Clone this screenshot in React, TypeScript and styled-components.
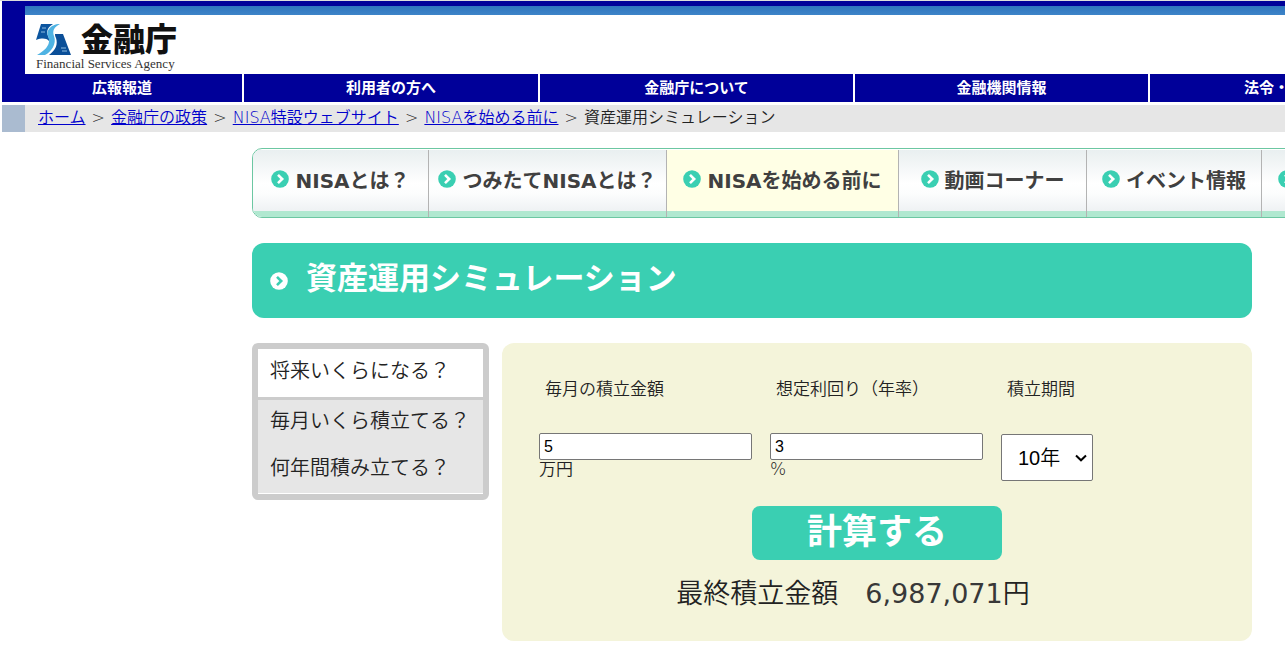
import React, { useState } from "react";
import styled, { createGlobalStyle } from "styled-components";

const fonts = `"DejaVu Sans", "Noto Sans CJK JP", sans-serif`;
const navy = "#000099";
const teal = "#3acfb2";

const Global = createGlobalStyle`
  *, *::before, *::after { box-sizing: border-box; }
  html { overflow-x: hidden; }
  body {
    margin: 0;
    background: #fff;
    color: #222;
    font-family: ${fonts};
    font-size: 16px;
    font-weight: 350;
  }
`;

const Page = styled.div`
  overflow: hidden;
`;

const Sheet = styled.div`
  min-width: 1504px;
  border-top: 1px solid #dcdcdc;
`;

const Header = styled.header`
  margin-left: 2px;
  background: ${navy};
  padding: 5px 0 0 23px;
`;

const Stripe = styled.div`
  height: 9px;
  background: linear-gradient(#2f74bd, #3d84c8);
`;

const Brand = styled.a`
  display: flex;
  flex-direction: column;
  height: 59px;
  padding: 8px 0 0 11px;
  background: #fff;
  color: #111;
  text-decoration: none;
`;

const BrandTop = styled.span`
  display: flex;
  align-items: center;
  gap: 9px;
  height: 34px;
`;

const BrandName = styled.span`
  font-size: 32px;
  line-height: 34px;
  font-weight: 900;
`;

const BrandSub = styled.span`
  font-family: "Liberation Serif", serif;
  font-size: 13px;
  line-height: 14px;
  font-weight: 400;
  color: #333;
`;

const GlobalNav = styled.nav`
  display: grid;
  grid-template-columns: 240px 294px 313px 293px 278px;
  gap: 2px;
  margin-left: 2px;
`;

const GlobalLink = styled.a`
  background: ${navy};
  color: #fff;
  font-size: 15px;
  font-weight: 700;
  line-height: 28px;
  text-align: center;
  text-decoration: none;
`;

const Crumbs = styled.nav`
  display: flex;
  margin: 3px 0 0 2px;
  border-left: 23px solid #aabbd0;
  background: #e6e6e6;
  padding: 0 0 2px 13px;
  line-height: 25px;
  white-space: pre;

  a { color: #0000cc; }
`;

const Separator = styled.span`
  padding: 0 1px;
`;

const Main = styled.main`
  width: 1000px;
  margin: 16px auto 0;
`;

const Tabs = styled.nav`
  display: grid;
  grid-template-columns: 176px 238px 232px 188px 175px 176px;
  width: max-content;
  height: 70px;
  padding-top: 1px;
  border: 1px solid #6cc7a2;
  border-radius: 10px;
  overflow: hidden;
`;

const Tab = styled.a<{ $active?: boolean }>`
  display: flex;
  align-items: center;
  justify-content: center;
  gap: 6px;
  border-right: 1px solid #b3b3b3;
  box-shadow: inset 0 -6px #b0e8d0;
  background: ${(p) =>
    p.$active ? "#ffffe5" : "linear-gradient(#e9eff0, #fff 50%, #fcfdfd 65%, #eff2f4 90%)"};
  padding-bottom: 6px;
  color: #404040;
  font-size: 20px;
  font-weight: 700;
  line-height: 30px;
  text-decoration: none;
  white-space: nowrap;

  svg { margin-bottom: 4px; }
`;

const Title = styled.h1`
  display: flex;
  align-items: center;
  gap: 18px;
  height: 75px;
  margin: 25px 0;
  padding-left: 18px;
  border-radius: 12px;
  background: ${teal};
  color: #fff;
  font-size: 31px;
  line-height: 45px;

  span { padding-bottom: 5px; }
`;

const Columns = styled.div`
  display: grid;
  grid-template-columns: 237px 1fr;
  gap: 13px;
  align-items: start;
`;

const Menu = styled.nav`
  display: flex;
  flex-direction: column;
  border: 6px solid #ccc;
  border-radius: 6px;
  background: #e6e6e6;
`;

const MenuLink = styled.a<{ $current?: boolean }>`
  padding: 0 12px 4px;
  color: #222;
  font-size: 20px;
  line-height: ${(p) => (p.$current ? "44px" : "43px")};
  text-decoration: none;
  ${(p) => p.$current && "background: #fff; border-bottom: 3px solid #ccc;"}
  &:last-child { padding-bottom: 3px; border-bottom: 1px solid #fff; }
`;

const Panel = styled.form`
  display: flex;
  flex-direction: column;
  align-items: center;
  padding: 34px 37px 28px;
  border-radius: 12px;
  background: #f4f4da;
`;

const Fields = styled.div`
  display: grid;
  grid-template-columns: repeat(3, 213px);
  gap: 18px;
  width: 100%;
`;

const Field = styled.div`
  display: flex;
  flex-direction: column;
  align-items: flex-start;
  font-size: 17px;
  line-height: 18px;
`;

const FieldLabel = styled.label`
  padding-left: 6px;
  line-height: 24px;
  margin-bottom: 32px;
`;

const NumberInput = styled.input`
  width: 100%;
  height: 27px;
  padding: 1px 4px;
  border: 1px solid #767676;
  border-radius: 2px;
  background: #fff;
  color: #000;
  font: 16px "Liberation Sans", sans-serif;
`;

const PeriodBox = styled.span`
  display: grid;
  align-items: center;
  margin-top: 1px;

  select, svg { grid-area: 1 / 1; }
  svg { justify-self: end; margin-right: 6px; pointer-events: none; }
`;

const PeriodSelect = styled.select`
  appearance: none;
  width: 92px;
  height: 47px;
  padding: 0 16px;
  border: 1px solid #767676;
  border-radius: 2px;
  background: #fff;
  color: #000;
  font: 350 20px "Liberation Sans", "Noto Sans CJK JP", sans-serif;
`;

const Submit = styled.button`
  width: 250px;
  height: 54px;
  margin-top: 25px;
  padding: 0 0 2px;
  border: 0;
  border-radius: 8px;
  background: ${teal};
  color: #fff;
  font: 700 35px/52px ${fonts};
`;

const Result = styled.p`
  margin: 15px 0 0;
  padding-right: 48px;
  font-size: 27px;
  line-height: 38px;
`;

const Amount = styled.span`
  color: #383838;
  font-weight: 400;
`;

function Bullet({ disc, mark }: { disc: string; mark: string }) {
  return (
    <svg width="18" height="18" viewBox="0 0 18 18" aria-hidden="true">
      <circle cx="9" cy="9" r="8.8" fill={disc} />
      <path d="M7 4.8 11.2 9 7 13.2" fill="none" stroke={mark} strokeWidth="2.6" />
    </svg>
  );
}

function Emblem() {
  return (
    <svg width="36" height="32" viewBox="0 0 36 32" aria-hidden="true">
      <path d="M5 0H17C12 3 10 7 12 12C13 14 13 15 13 17C10 14 6 14 0 16Z" fill="#0b559f" />
      <path d="M24 0C18 3 16 7 18 12C21 20 15 28 9 31H1C8 27 14 22 13 15C12 11 10 9 13 5C15 2 19 0 24 0Z" fill="#4fb3e3" />
      <path d="M19 10H27L35 31H13C20 26 22 20 20 14C19 12 19 11 19 10Z" fill="#0b4f98" />
      <path d="M6 4H10M5 8H9M25 24H30M26 27H31" stroke="#8fbde0" strokeWidth="1" />
    </svg>
  );
}

const sections = ["広報報道", "利用者の方へ", "金融庁について", "金融機関情報", "法令・指針等"];
const trail = ["ホーム", "金融庁の政策", "NISA特設ウェブサイト", "NISAを始める前に"];
const tabs = ["NISAとは？", "つみたてNISAとは？", "NISAを始める前に", "動画コーナー", "イベント情報", "資料コーナー"];
const modes = ["将来いくらになる？", "毎月いくら積立てる？", "何年間積み立てる？"];
const years = [5, 10, 15, 20, 25, 30];

export default function App() {
  const [amount, setAmount] = useState("5");
  const [rate, setRate] = useState("3");
  const [period, setPeriod] = useState("10");
  const [total, setTotal] = useState(6987071);

  const calculate = (e: React.FormEvent) => {
    e.preventDefault();
    const monthly = Number(rate) / 1200;
    const months = Number(period) * 12;
    const growth = monthly ? (Math.pow(1 + monthly, months) - 1) / monthly : months;
    setTotal(Math.round(Number(amount) * 10000 * growth));
  };

  return (
    <Page>
      <Global />
      <Sheet>
        <Header>
          <Stripe />
          <Brand href="#">
            <BrandTop>
              <Emblem />
              <BrandName>金融庁</BrandName>
            </BrandTop>
            <BrandSub>Financial Services Agency</BrandSub>
          </Brand>
        </Header>
        <GlobalNav>
          {sections.map((s) => (
            <GlobalLink href="#" key={s}>{s}</GlobalLink>
          ))}
        </GlobalNav>
        <Crumbs>
          {trail.map((t) => (
            <React.Fragment key={t}>
              <a href="#">{t}</a>
              <Separator>{" > "}</Separator>
            </React.Fragment>
          ))}
          <span>資産運用シミュレーション</span>
        </Crumbs>
        <Main>
          <Tabs>
            {tabs.map((t, i) => (
              <Tab href="#" key={t} $active={i === 2}>
                <Bullet disc={teal} mark="#fff" />
                {t}
              </Tab>
            ))}
          </Tabs>
          <Title>
            <Bullet disc="#fff" mark={teal} />
            <span>資産運用シミュレーション</span>
          </Title>
          <Columns>
            <Menu>
              {modes.map((m, i) => (
                <MenuLink href="#" key={m} $current={i === 0}>{m}</MenuLink>
              ))}
            </Menu>
            <Panel onSubmit={calculate}>
              <Fields>
                <Field>
                  <FieldLabel htmlFor="amount">毎月の積立金額</FieldLabel>
                  <NumberInput id="amount" value={amount} onChange={(e) => setAmount(e.target.value)} />
                  <span>万円</span>
                </Field>
                <Field>
                  <FieldLabel htmlFor="rate">想定利回り（年率）</FieldLabel>
                  <NumberInput id="rate" value={rate} onChange={(e) => setRate(e.target.value)} />
                  <span>%</span>
                </Field>
                <Field>
                  <FieldLabel htmlFor="period">積立期間</FieldLabel>
                  <PeriodBox>
                    <PeriodSelect id="period" value={period} onChange={(e) => setPeriod(e.target.value)}>
                      {years.map((y) => (
                        <option key={y} value={y}>{y}年</option>
                      ))}
                    </PeriodSelect>
                    <svg width="12" height="8" viewBox="0 0 12 8" aria-hidden="true">
                      <path d="M1 1.5 6 6.3 11 1.5" fill="none" stroke="#000" strokeWidth="2" />
                    </svg>
                  </PeriodBox>
                </Field>
              </Fields>
              <Submit type="submit">計算する</Submit>
              <Result>
                最終積立金額　<Amount>{total.toLocaleString("en-US")}</Amount>円
              </Result>
            </Panel>
          </Columns>
        </Main>
      </Sheet>
    </Page>
  );
}
